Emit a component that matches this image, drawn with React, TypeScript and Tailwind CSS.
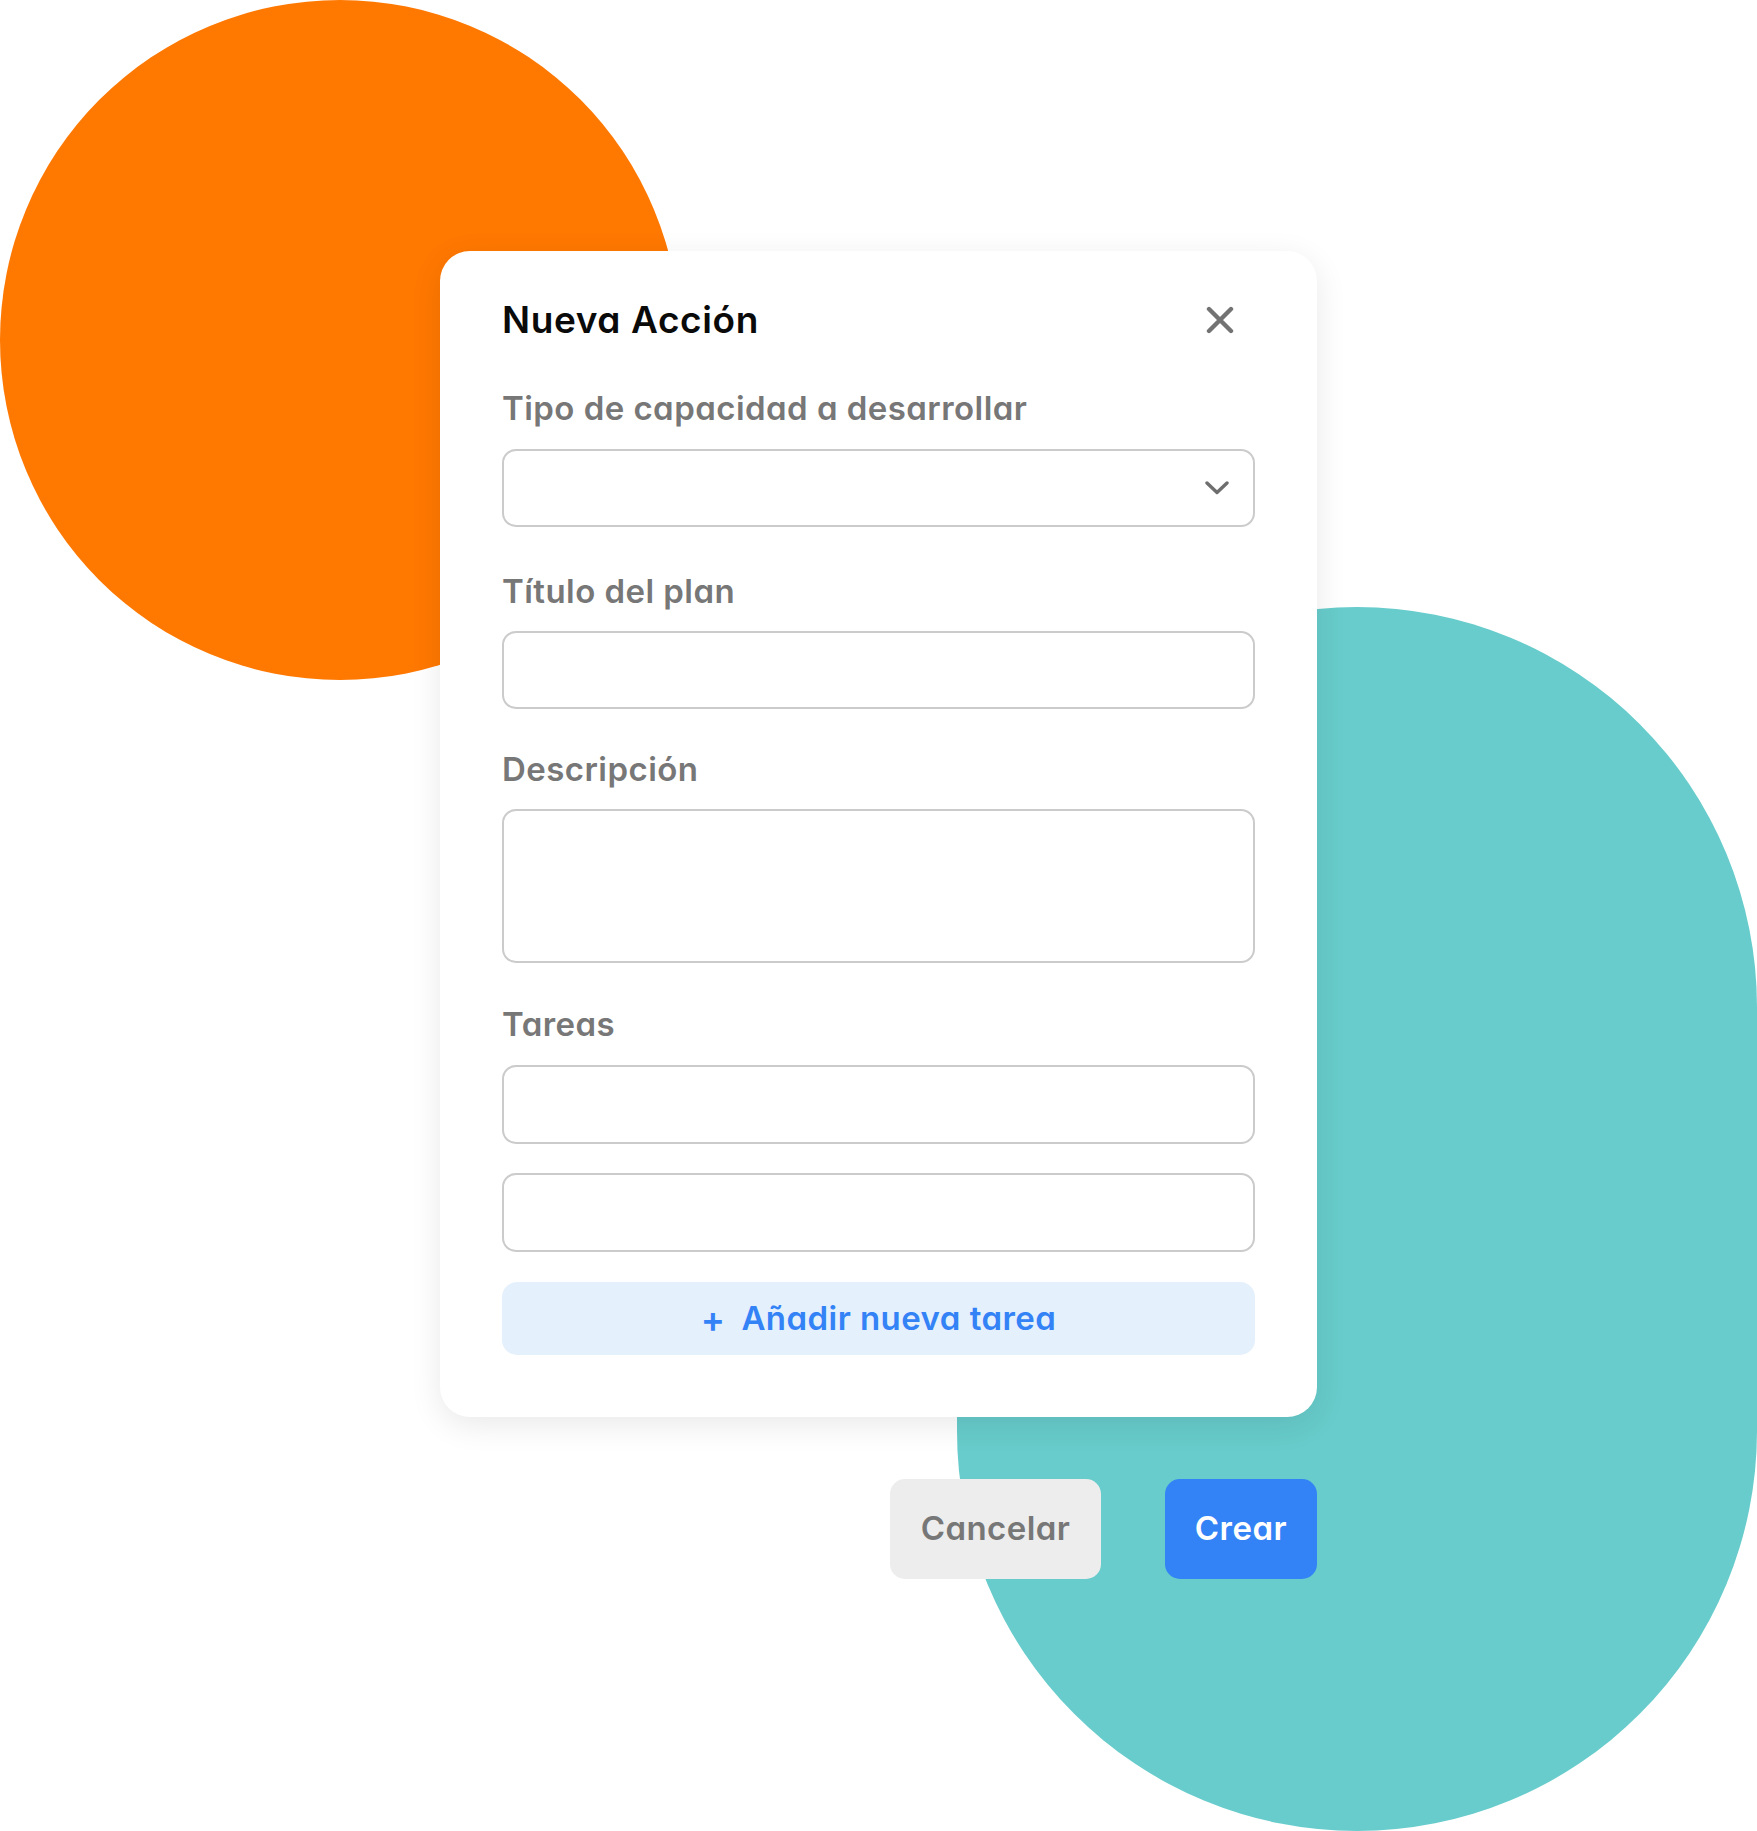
import React from "react";

const font = "font-['Inter','Noto_Sans',sans-serif] [font-feature-settings:'cv11']";

function Label({ children, className = "" }: { children: React.ReactNode; className?: string }) {
  return (
    <div className={`h-[40px] text-[33px] leading-[40px] font-semibold text-[#777777] tracking-[0.45px] ${className}`}>
      {children}
    </div>
  );
}

function Field({ className = "" }: { className?: string }) {
  return (
    <input
      type="text"
      className={`block w-full rounded-[14px] border-2 border-[#cbcbcb] bg-white outline-none ${className}`}
    />
  );
}

export default function App() {
  return (
    <div className={`relative w-[1757px] h-[1831px] overflow-hidden bg-white ${font}`}>
      <div className="absolute left-0 top-0 w-[680px] h-[680px] rounded-full bg-[#ff7800]" />
      <div className="absolute left-[957px] top-[607px] w-[800px] h-[1224px] rounded-full bg-[#67cccb]" />

      <div className="relative pl-[440px] pt-[251px]">
        <div className="w-[877px] rounded-[30px] bg-white px-[62px] pt-[47px] pb-[62px] shadow-[0_8px_32px_rgba(0,0,0,0.09)]">
          <div className="flex h-[44px] items-center justify-between">
            <h2 className="text-[37px] leading-[44px] font-semibold text-[#0a0a0a] tracking-[0.6px]">Nueva Acción</h2>
            <button className="mr-[21px] flex h-[28px] w-[28px] items-center justify-center" aria-label="Cerrar">
              <svg width="28" height="28" viewBox="0 0 28 28" fill="none">
                <path d="M3 3L25 25M25 3L3 25" stroke="#737373" strokeWidth="4.4" strokeLinecap="round" />
              </svg>
            </button>
          </div>

          <Label className="mt-[46px]">Tipo de capacidad a desarrollar</Label>
          <div className="mt-[21px] flex h-[78px] w-full items-center justify-end rounded-[14px] border-2 border-[#cbcbcb] pr-[24px]">
            <svg width="24" height="14" viewBox="0 0 24 14" fill="none">
              <path d="M2 2L12 11.5L22 2" stroke="#6e6e6e" strokeWidth="3.4" strokeLinecap="round" strokeLinejoin="round" />
            </svg>
          </div>

          <Label className="mt-[44px]">Título del plan</Label>
          <Field className="mt-[20px] h-[78px]" />

          <Label className="mt-[40px]">Descripción</Label>
          <textarea className="mt-[20px] block h-[154px] w-full resize-none rounded-[14px] border-2 border-[#cbcbcb] bg-white outline-none" />

          <Label className="mt-[41px]">Tareas</Label>
          <Field className="mt-[21px] h-[79px]" />
          <Field className="mt-[29px] h-[79px]" />

          <button className="mt-[30px] flex h-[73px] w-full items-center justify-center gap-[16px] rounded-[15px] bg-[#e4f0fc] text-[33px] font-semibold text-[#3382f6] tracking-[0.45px]">
            <span className="text-[36px] leading-none">+</span>
            <span>Añadir nueva tarea</span>
          </button>
        </div>

        <div className="mt-[62px] flex w-[877px] justify-end gap-[64px]">
          <button className="flex h-[100px] w-[211px] items-center justify-center rounded-[15px] bg-[#ededed] text-[33px] font-semibold text-[#777777] tracking-[0.4px]">
            Cancelar
          </button>
          <button className="flex h-[100px] w-[152px] items-center justify-center rounded-[15px] bg-[#3382f6] text-[33px] font-semibold text-white tracking-[0.5px]">
            Crear
          </button>
        </div>
      </div>
    </div>
  );
}
